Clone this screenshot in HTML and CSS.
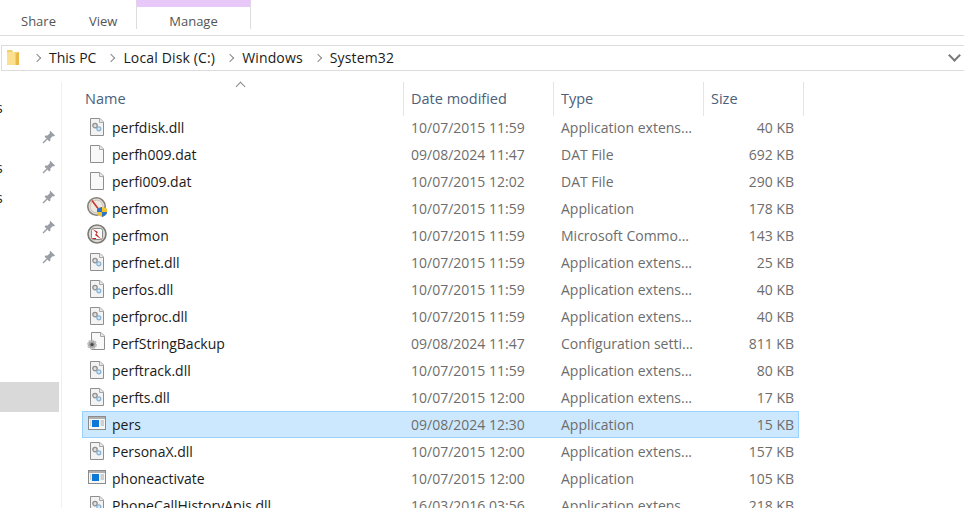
FILE: index.html
```html
<!DOCTYPE html>
<html lang="en">
<head>
  <meta charset="UTF-8">
  <title>System32</title>
  <link rel="stylesheet" href="styles.css">
</head>
<body>
  <svg class="defs" width="0" height="0">
    <symbol id="page" viewBox="0 0 16 18">
      <path d="M1.5 .5H11L14.5 4V17.5H1.5Z" fill="#f8f8f8" stroke="#8e8e8e"/>
      <path d="M10.5 .5V4.5H14.5" fill="#e8e8e8" stroke="#a8a8a8"/>
    </symbol>
    <symbol id="dll" viewBox="0 0 16 18">
      <path d="M1.5 .5H11L14.5 4V17.5H1.5Z" fill="#f3f3f3" stroke="#8e8e8e"/>
      <path d="M10.5 .5V4.5H14.5" fill="#e8e8e8" stroke="#a8a8a8"/>
      <circle cx="6" cy="7.6" r="2.2" fill="#e0e0e0" stroke="#8f8f8f" stroke-width="1.3"/>
      <circle cx="9.8" cy="10.8" r="2" fill="#d5e6f4" stroke="#86b1d3" stroke-width="1.2"/>
    </symbol>
    <symbol id="config" viewBox="0 0 20 20">
      <path d="M4.5 .5H14L17.5 4V17.5H4.5Z" fill="#f8f8f8" stroke="#8e8e8e"/>
      <path d="M13.5 .5V4.5H17.5" fill="#e8e8e8" stroke="#a8a8a8"/>
      <circle cx="5" cy="12.5" r="4" fill="#a0a0a0" stroke="#c4c4c4" stroke-width="2" stroke-dasharray="2 1"/>
      <circle cx="5" cy="12.5" r="1.6" fill="#444"/>
    </symbol>
    <symbol id="app" viewBox="0 0 18 14">
      <rect x=".5" y=".5" width="17" height="13" fill="#f7f7f7" stroke="#8b8b8b"/>
      <rect x="1" y="1" width="16" height="2" fill="#b0b0b0"/>
      <rect x="4" y="4" width="7" height="7" fill="#0b78d7"/>
      <path d="M12.5 5H16M12.5 7H16M12.5 9H16M2 5H3.2M2 7H3.2M2 9H3.2" stroke="#a6a6a6"/>
    </symbol>
    <symbol id="pin" viewBox="0 0 14 14">
      <path d="M8.2 .8L13 5.6L11.9 6.4L10.9 6L8.4 8.5L8.4 10.6L7.3 11.4L2.6 6.7L3.4 5.6L5.5 5.6L8 3.1L7.6 2.1Z" fill="#9a9fa6"/>
      <path d="M5 9L1 13" stroke="#9a9fa6" stroke-width="1.4"/>
    </symbol>
    <symbol id="gauge" viewBox="0 0 20 20">
      <circle cx="9.5" cy="9.5" r="8.7" fill="#e9e2d8" stroke="#85817a" stroke-width="1.6"/>
      <circle cx="9.5" cy="9.5" r="6.4" fill="#efe9e2" stroke="#c9c3ba"/>
      <path d="M5 3.5L11 11.5" stroke="#c4352b" stroke-width="1.5"/>
      <path d="M15 10L20 11.5V15.5C20 17.6 17.4 19 15 20C12.6 19 10 17.6 10 15.5V11.5Z" fill="#f4c430"/>
      <path d="M15 10V15H10V11.5ZM15 15H20V15.5C20 17.6 17.4 19 15 20Z" fill="#2c74c9"/>
    </symbol>
    <symbol id="gauge-red" viewBox="0 0 20 20">
      <circle cx="10" cy="10" r="9" fill="#dcd9d4" stroke="#7c7a76" stroke-width="1.6"/>
      <rect x="4.5" y="4.5" width="11" height="11" rx="2" fill="#fbfbfb" stroke="#8b8b8b"/>
      <path d="M5.5 5L11 8L9.5 10L14.5 15.5L8 11L9.5 9Z" fill="#c9231c"/>
      <path d="M5.5 14.5H9" stroke="#c9231c"/>
    </symbol>
  </svg>

  <nav class="ribbon">
    <span class="tab tab-share">Share</span>
    <span class="tab tab-view">View</span>
    <span class="tab tab-manage">Manage</span>
  </nav>

  <div class="address">
    <svg class="folder" viewBox="0 0 12 15" width="12" height="15">
      <path d="M0 0H5L6 2H9V15H0Z" fill="#f5cf6a"/>
      <path d="M9 2.5L12 2V15H9Z" fill="#e9b949"/>
      <path d="M0 2H8V15H0Z" fill="#fbe08f"/>
    </svg>
    <span class="chev"></span><span class="crumb crumb-root">This PC</span>
    <span class="chev"></span><span class="crumb">Local Disk (C:)</span>
    <span class="chev"></span><span class="crumb">Windows</span>
    <span class="chev"></span><span class="crumb">System32</span>
    <span class="drop"></span>
  </div>

  <div class="main">
    <aside class="side">
      <div class="side-row"><span class="cut">s</span></div>
      <div class="side-row"><svg class="pin"><use href="#pin"/></svg></div>
      <div class="side-row"><span class="cut">s</span><svg class="pin"><use href="#pin"/></svg></div>
      <div class="side-row"><span class="cut">s</span><svg class="pin"><use href="#pin"/></svg></div>
      <div class="side-row"><svg class="pin"><use href="#pin"/></svg></div>
      <div class="side-row"><svg class="pin"><use href="#pin"/></svg></div>
      <div class="side-current"></div>
    </aside>

    <section class="files">
      <div class="head">
        <span class="sort"></span>
        <div class="col col-name">Name</div>
        <div class="col">Date modified</div>
        <div class="col">Type</div>
        <div class="col col-size">Size</div>
      </div>

      <div class="row"><span class="name"><svg class="ico"><use href="#dll"/></svg>perfdisk.dll</span><span>10/07/2015 11:59</span><span>Application extens...</span><span class="size">40 KB</span></div>
      <div class="row"><span class="name"><svg class="ico"><use href="#page"/></svg>perfh009.dat</span><span>09/08/2024 11:47</span><span>DAT File</span><span class="size">692 KB</span></div>
      <div class="row"><span class="name"><svg class="ico"><use href="#page"/></svg>perfi009.dat</span><span>10/07/2015 12:02</span><span>DAT File</span><span class="size">290 KB</span></div>
      <div class="row"><span class="name"><svg class="ico ico-wide"><use href="#gauge"/></svg>perfmon</span><span>10/07/2015 11:59</span><span>Application</span><span class="size">178 KB</span></div>
      <div class="row"><span class="name"><svg class="ico ico-wide"><use href="#gauge-red"/></svg>perfmon</span><span>10/07/2015 11:59</span><span>Microsoft Commo...</span><span class="size">143 KB</span></div>
      <div class="row"><span class="name"><svg class="ico"><use href="#dll"/></svg>perfnet.dll</span><span>10/07/2015 11:59</span><span>Application extens...</span><span class="size">25 KB</span></div>
      <div class="row"><span class="name"><svg class="ico"><use href="#dll"/></svg>perfos.dll</span><span>10/07/2015 11:59</span><span>Application extens...</span><span class="size">40 KB</span></div>
      <div class="row"><span class="name"><svg class="ico"><use href="#dll"/></svg>perfproc.dll</span><span>10/07/2015 11:59</span><span>Application extens...</span><span class="size">40 KB</span></div>
      <div class="row"><span class="name"><svg class="ico ico-wide"><use href="#config"/></svg>PerfStringBackup</span><span>09/08/2024 11:47</span><span>Configuration setti...</span><span class="size">811 KB</span></div>
      <div class="row"><span class="name"><svg class="ico"><use href="#dll"/></svg>perftrack.dll</span><span>10/07/2015 11:59</span><span>Application extens...</span><span class="size">80 KB</span></div>
      <div class="row"><span class="name"><svg class="ico"><use href="#dll"/></svg>perfts.dll</span><span>10/07/2015 12:00</span><span>Application extens...</span><span class="size">17 KB</span></div>
      <div class="row selected"><span class="name"><svg class="ico ico-app"><use href="#app"/></svg>pers</span><span>09/08/2024 12:30</span><span>Application</span><span class="size">15 KB</span></div>
      <div class="row"><span class="name"><svg class="ico"><use href="#dll"/></svg>PersonaX.dll</span><span>10/07/2015 12:00</span><span>Application extens...</span><span class="size">157 KB</span></div>
      <div class="row"><span class="name"><svg class="ico ico-app"><use href="#app"/></svg>phoneactivate</span><span>10/07/2015 12:00</span><span>Application</span><span class="size">105 KB</span></div>
      <div class="row"><span class="name"><svg class="ico"><use href="#dll"/></svg>PhoneCallHistoryApis.dll</span><span>16/03/2016 03:56</span><span>Application extens...</span><span class="size">218 KB</span></div>
    </section>
  </div>
</body>
</html>
```

FILE: styles.css
```css
html, body {
  margin: 0;
  height: 100%;
  overflow: hidden;
  background: #fff;
}

body {
  font-family: "Open Sans", "Noto Sans", sans-serif;
  font-size: 14px;
  color: #1a1a1a;
}

.defs {
  display: block;
  height: 0;
}

/* ribbon */
.ribbon {
  display: flex;
  height: 35px;
  border-bottom: 1px solid #dcdcdc;
  color: #555;
  font-size: 13px;
}

.tab {
  display: block;
  line-height: 14px;
  padding-top: 14px;
}

.tab-share {
  margin-left: 21px;
  width: 68px;
}

.tab-view {
  width: 47px;
}

.tab-manage {
  width: 113px;
  height: 15px;
  text-align: center;
  border-top: 7px solid #e8c8f8;
  border-left: 1px solid #dcdcdc;
  border-right: 1px solid #dcdcdc;
  padding-top: 7px;
}

/* address bar */
.address {
  display: flex;
  align-items: center;
  height: 24px;
  margin: 9px 0 0 1px;
  border: 1px solid #dcdcdc;
  border-right: 0;
  font-size: 14px;
  line-height: 20px;
}

.folder {
  margin-left: 5px;
  margin-right: 15px;
  margin-bottom: 2px;
}

.chev {
  width: 5px;
  height: 5px;
  margin-right: 9px;
  border-top: 1.5px solid #8a8a8a;
  border-right: 1.5px solid #8a8a8a;
  transform: rotate(45deg);
}

.crumb {
  margin-right: 12px;
  letter-spacing: .15px;
}

.crumb-root {
  letter-spacing: 0;
}

.drop {
  width: 7px;
  height: 7px;
  margin-left: auto;
  margin-right: 5px;
  margin-top: -5px;
  border-bottom: 2px solid #777;
  border-right: 2px solid #777;
  transform: rotate(45deg);
}

/* navigation pane */
.main {
  display: flex;
  margin-top: 11px;
}

.side {
  width: 61px;
  height: 430px;
  border-right: 1px solid #f0f0f0;
}

.side-row {
  position: relative;
  height: 30px;
}

.side-row:first-child {
  margin-top: 10px;
}

.cut {
  display: block;
  margin-left: -4px;
  padding-top: 1px;
  line-height: 30px;
  font-size: 14px;
}

.pin {
  position: absolute;
  top: 8px;
  left: 42px;
  width: 14px;
  height: 14px;
}

.side-current {
  width: 59px;
  height: 30px;
  margin-top: 110px;
  background: #d9d9d9;
}

/* file list */
.files {
  position: relative;
  margin-left: 20px;
  width: 722px;
}

.head {
  display: grid;
  grid-template-columns: 321px 150px 150px 101px;
  height: 32px;
  color: #4c607a;
  font-size: 14.5px;
}

.col {
  border-left: 1px solid #e5e5e5;
  padding-left: 7px;
  line-height: 34px;
}

.col-name {
  border-left: 0;
  padding-left: 3px;
}

.col-size {
  border-right: 1px solid #e5e5e5;
}

.sort {
  position: absolute;
  top: 1px;
  left: 155px;
  width: 6px;
  height: 6px;
  border-top: 1px solid #8a8a8a;
  border-left: 1px solid #8a8a8a;
  transform: rotate(45deg);
}

.row {
  display: grid;
  grid-template-columns: 321px 150px 150px 96px;
  align-items: center;
  width: 717px;
  height: 27px;
  color: #6d6d6d;
  white-space: nowrap;
}

.row span:nth-child(2),
.row span:nth-child(3) {
  padding-left: 8px;
}

.row .name {
  display: flex;
  align-items: center;
  color: #1a1a1a;
}

.row .size {
  text-align: right;
  padding-right: 5px;
}

.row.selected {
  background: #cce8ff;
  outline: 1px solid #99d1ff;
  outline-offset: -1px;
}

.ico {
  width: 16px;
  height: 18px;
  margin: 0 7px 2px 7px;
  flex: none;
}

.ico-wide {
  width: 20px;
  height: 20px;
  margin: 0 5px 4px 5px;
}

.ico-app {
  width: 18px;
  height: 14px;
  margin: 0 6px 4px 6px;
}
```
